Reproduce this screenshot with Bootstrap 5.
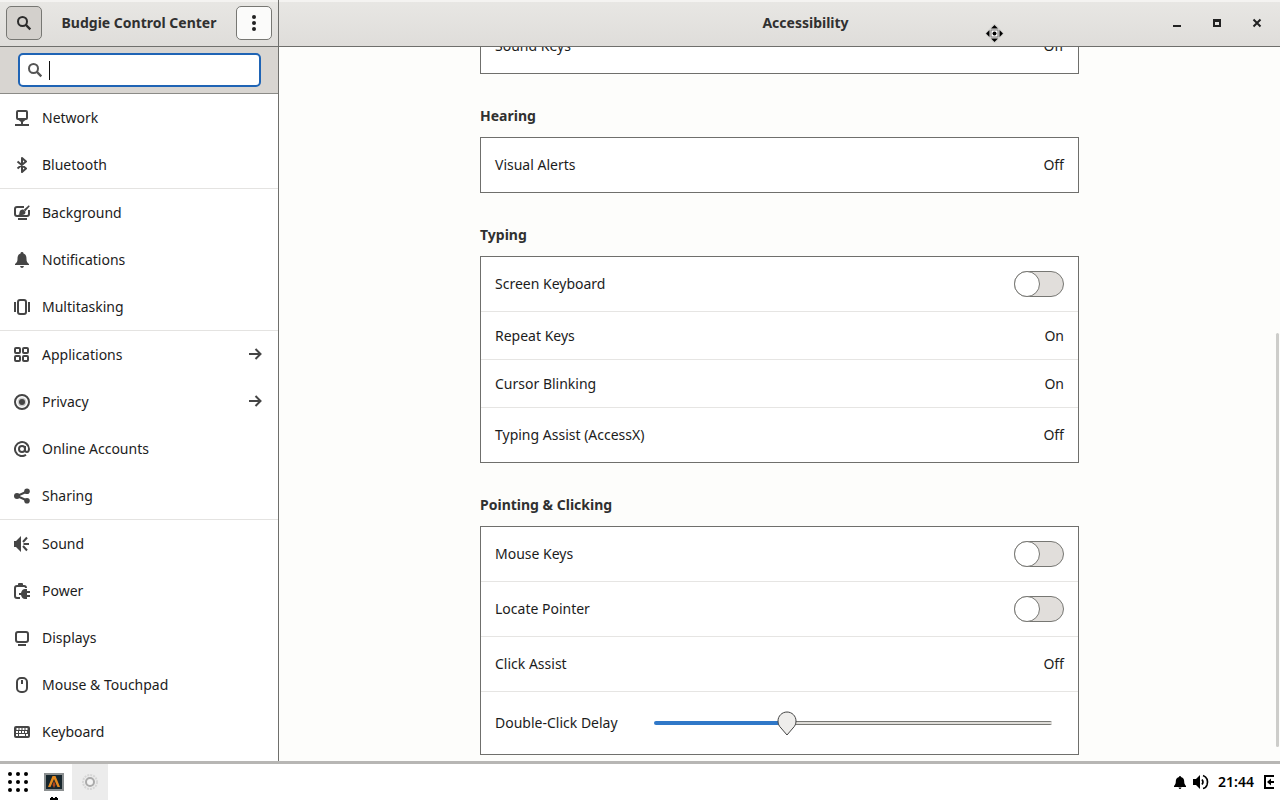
<!DOCTYPE html>
<html lang="en">
<head>
<meta charset="utf-8">
<meta name="viewport" content="width=device-width, initial-scale=1">
<title>Budgie Control Center</title>
<link href="https://cdn.jsdelivr.net/npm/bootstrap@5.3.0/dist/css/bootstrap.min.css" rel="stylesheet">
<style>
  body { font-family: "Noto Sans", sans-serif; font-size: 14px; line-height: 20px; color: #1c1c1c; background: #fdfdfb; }
  svg { display: block; flex: none; fill: #454545; }
  .ln { fill: none; stroke: #454545; stroke-width: 2; }
  .sidebar { width: 279px; border-right: 1px solid #6f6f6c; background: #fff; }
  .titlebar { height: 47px; background: linear-gradient(#e8e7e4, #dfddda); border-bottom: 1px solid #6f6f6c; box-shadow: inset 0 2px #f4f3f1; color: #303030; }
  .titlebar h1 { font-size: 14px; line-height: 20px; }
  .side-title { padding: 0 6px; }
  .tool-btn { width: 36px; height: 34px; border: 1px solid #777773; border-radius: 5px; background: #fbfbfa; }
  .tool-btn.active { background: #d3d0cc; }
  .win-btn { width: 24px; height: 24px; border: 0; background: none; }
  .win-controls { right: 11px; }
  .panel-title { padding-left: 52px; }
  .search-strip { height: 47px; background: #d8d5d1; border-bottom: 1px solid #8b8b87; padding: 0 17px 0 18px; }
  .search-box { height: 34px; border: 2px solid #1f64b5; border-radius: 5px; background: #fff; padding: 0 7px; }
  .search-box input { border: 0; outline: 0; background: none; height: 24px; min-width: 0; caret-color: transparent; }
  .caret { width: 1px; height: 19px; background: #111; margin-left: 6px; }
  .side-link { height: 47px; padding: 0 14px; gap: 12px; color: inherit; text-decoration: none; }
  .side-group + .side-group { border-top: 1px solid #e4e3e1; }
  .settings { width: 100%; max-width: 599px; padding-bottom: 6px; }
  .settings h2 { font-size: 14px; line-height: 20px; color: #303030; margin: 32px 0 11px; }
  .group-box { background: #fff; border: 1px solid #6f6f6c; }
  .set-row { min-height: 54px; padding: 0 14px; }
  .set-row + .set-row { border-top: 1px solid #e6e5e3; min-height: 55px; }
  .set-row + .set-row.short-row { min-height: 48px; }
  .set-row + .set-row.tall-row { min-height: 63px; }
  .toggle { appearance: none; width: 50px; height: 26px; border: 1px solid #777773; border-radius: 13px; background: #e1dedb; margin: 0; }
  .toggle::before { content: ""; display: block; box-sizing: border-box; width: 26px; height: 26px; margin: -1px; border: 1px solid #777773; border-radius: 50%; background: #fff; }
  .toggle:checked::before { margin-left: 23px; }
  .delay { appearance: none; height: 26px; background: none; margin: 0 12px 0 36px; min-width: 0; }
  .delay::-webkit-slider-runnable-track { height: 4px; border-radius: 2px; box-shadow: inset 0 0 0 1px #777773; background: #dedcd8; }
  .delay::-webkit-slider-runnable-track { background: linear-gradient(90deg, #3078c8 33%, transparent 33%), linear-gradient(#777773 1px, #dedcd8 1px 3px, #777773 3px); box-shadow: none; }
  .delay::-webkit-slider-thumb { appearance: none; width: 20px; height: 26px; margin-top: -10px; border: 0; background: url("data:image/svg+xml,%3Csvg xmlns='http://www.w3.org/2000/svg' width='20' height='26'%3E%3Cpath d='M10 1C5 1 1 5 1 10c0 3 1 5 3 7l6 7 6-7c2-2 3-4 3-7 0-5-4-9-9-9z' fill='%23eeedeb' stroke='%23444'/%3E%3C/svg%3E") no-repeat; }
  .scroll-pill { right: 1px; bottom: 14px; width: 3px; height: 58%; border-radius: 2px; background: #cdcdca; }
  .pointer { left: 985px; top: 24px; }
  .taskbar { height: 39px; background: #fff; border-top: 3px solid #b7b6b4; color: #000; }
  .taskbar button { border: 0; background: none; padding: 0; height: 36px; width: 36px; }
  .taskbar .current { background: #ececec; }
  .taskbar svg { fill: #000; }
  .running::after { content: ""; position: absolute; bottom: 0; left: 14px; width: 8px; height: 3px; background: radial-gradient(circle at 2px 2px, #000 2px, transparent 2px) 0 0 / 4px 4px; }
  .clock { font-weight: 600; }
</style>
</head>
<body class="vh-100 d-flex flex-column overflow-hidden">
<div class="d-flex flex-grow-1 overflow-hidden">
  <aside class="sidebar d-flex flex-column flex-shrink-0">
    <header class="titlebar side-title d-flex align-items-center justify-content-between flex-shrink-0">
      <button class="tool-btn active d-flex align-items-center justify-content-center" aria-label="Search">
        <svg width="16" height="16"><circle cx="6.500" cy="6.500" r="4.500" fill="none" stroke="#2c2c2c" stroke-width="2"/><path d="M9.500 9.500l4.800 4.800" stroke="#2c2c2c" stroke-width="2.400"/></svg>
      </button>
      <h1 class="fw-bold m-0">Budgie Control Center</h1>
      <button class="tool-btn d-flex align-items-center justify-content-center" aria-label="Menu">
        <svg width="16" height="16"><g fill="#222"><circle cx="8" cy="2" r="2"/><circle cx="8" cy="8" r="2"/><circle cx="8" cy="14" r="2"/></g></svg>
      </button>
    </header>
    <div class="search-strip flex-shrink-0 d-flex align-items-center">
      <label class="search-box d-flex align-items-center flex-grow-1">
        <svg width="16" height="16"><circle cx="6.500" cy="6.500" r="4.500" fill="none" stroke="#555" stroke-width="2"/><path d="M9.500 9.500l4.800 4.800" stroke="#555" stroke-width="2.400"/></svg>
        <span class="caret"></span>
        <input type="text" class="flex-grow-1 p-0" aria-label="Search settings">
      </label>
    </div>
    <nav class="overflow-hidden">
      <div class="side-group">
        <a href="#" class="side-link d-flex align-items-center"><svg width="16" height="16"><path class="ln" d="M4 1h8q1 0 1 1v6q0 1-1 1H4Q3 9 3 8V2q0-1 1-1z"/><path d="M4.500 8h7v2L9 12v2h6v2H1v-2h6v-2L4.500 10z"/></svg>Network</a>
        <a href="#" class="side-link d-flex align-items-center"><svg width="16" height="16"><path class="ln" stroke-linejoin="round" d="M3.500 4.500l8.500 7L8 15V1l4 3.500-8.500 7"/></svg>Bluetooth</a>
      </div>
      <div class="side-group">
        <a href="#" class="side-link d-flex align-items-center"><svg width="16" height="16"><path class="ln" d="M10 2H3Q1 2 1 4v5q0 2 2 2h10q2 0 2-2V5"/><path d="M4 13h9v2H4zM14.800.2l1 1-4.500 5-1.500-1.500zM9.200 4.500l2.300 2.300q0 3.200-3.500 3.200-2 0-3.700-.5Q6 8.500 5.500 7q.5-3 3.700-2.500z"/></svg>Background</a>
        <a href="#" class="side-link d-flex align-items-center"><svg width="16" height="16"><path d="M8 0q1.500 0 1.500 1.400C12 2.200 12.500 4.500 12.500 7c0 2.500.8 3.800 2.500 5v1H1v-1c1.700-1.200 2.500-2.500 2.500-5 0-2.500.5-4.800 3-5.600Q6.500 0 8 0zM6 14h4q-.5 2-2 2t-2-2z"/></svg>Notifications</a>
        <a href="#" class="side-link d-flex align-items-center"><svg width="16" height="16"><rect class="ln" x="4" y="1" width="8" height="14" rx="2"/><path d="M0 3h2v10H0zM14 3h2v10h-2z"/></svg>Multitasking</a>
      </div>
      <div class="side-group">
        <a href="#" class="side-link d-flex align-items-center"><svg width="16" height="16"><g class="ln"><rect x="1" y="1" width="5" height="5" rx="1"/><rect x="9" y="1" width="5" height="5" rx="1"/><rect x="1" y="9" width="5" height="5" rx="1"/><rect x="9" y="9" width="5" height="5" rx="1"/></g></svg>Applications<svg class="ms-auto" width="16" height="16"><path class="ln" d="M1 7h11M7.500 2l5 5-5 5"/></svg></a>
        <a href="#" class="side-link d-flex align-items-center"><svg width="16" height="16"><circle class="ln" cx="8" cy="8" r="7"/><circle cx="8" cy="8" r="4.500" fill="#ccc"/><circle cx="8" cy="8" r="3"/></svg>Privacy<svg class="ms-auto" width="16" height="16"><path class="ln" d="M1 7h11M7.500 2l5 5-5 5"/></svg></a>
        <a href="#" class="side-link d-flex align-items-center"><svg width="16" height="16"><circle class="ln" cx="8" cy="8" r="3"/><path class="ln" d="M11 5v4q.2 2 2 2t2-3a7 7 0 1 0-3 5.800"/></svg>Online Accounts</a>
        <a href="#" class="side-link d-flex align-items-center"><svg width="16" height="16"><path class="ln" d="M13 3.500L3 8l10 4.500"/><circle cx="3" cy="8" r="3"/><circle cx="13" cy="3.200" r="2.800"/><circle cx="13" cy="12.800" r="2.800"/></svg>Sharing</a>
      </div>
      <div class="side-group">
        <a href="#" class="side-link d-flex align-items-center"><svg width="16" height="16"><path d="M0 5h2l5-5v16l-5-5H0z"/><path class="ln" d="M9 6l4-4.500M9.500 8H15M9 10l4 4.500"/></svg>Sound</a>
        <a href="#" class="side-link d-flex align-items-center"><svg width="16" height="16"><path class="ln" d="M6 15H3q-2 0-2-2V5q0-2 2-2h7q2 0 2 2"/><path d="M4 1q0-1 1-1h3q1 0 1 1v2H4zM5 10h2q1-4 4-4h2v2h3v2h-3v2h3v2h-3v2h-2q-3 0-4-4H5z"/></svg>Power</a>
        <a href="#" class="side-link d-flex align-items-center"><svg width="16" height="16"><rect class="ln" x="2" y="2" width="12" height="10" rx="2"/><path d="M4 14h8v2H4z"/></svg>Displays</a>
        <a href="#" class="side-link d-flex align-items-center"><svg width="16" height="16"><rect class="ln" x="3" y="1" width="10" height="14" rx="4"/><path d="M7 3h2v4H7z"/></svg>Mouse &amp; Touchpad</a>
        <a href="#" class="side-link d-flex align-items-center"><svg width="16" height="16"><rect y="2" width="16" height="12" rx="2"/><path stroke="#fff" stroke-width="2" stroke-dasharray="2 1" d="M2.500 5H14M2 8h12"/><path stroke="#fff" stroke-width="2" d="M2 11h2M5 11h6M12 11h2"/></svg>Keyboard</a>
      </div>
    </nav>
  </aside>
  <main class="d-flex flex-column flex-grow-1 position-relative overflow-hidden">
    <header class="titlebar d-flex align-items-center flex-shrink-0">
      <h1 class="panel-title fw-bold m-0 flex-grow-1 text-center">Accessibility</h1>
      <div class="win-controls position-absolute d-flex gap-3">
        <button class="win-btn p-1" aria-label="Minimize"><svg width="16" height="16"><path d="M4 10h8v2H4z" fill="#222"/></svg></button>
        <button class="win-btn p-1" aria-label="Maximize"><svg width="16" height="16"><path d="M4 4h8v8H4zM6 7v3h4V7z" fill="#222" fill-rule="evenodd"/></svg></button>
        <button class="win-btn p-1" aria-label="Close"><svg width="16" height="16"><path d="M4.500 4.500l7 7m0-7l-7 7" stroke="#222" stroke-width="2"/></svg></button>
      </div>
    </header>
    <div class="d-flex flex-column justify-content-end align-items-center flex-grow-1 overflow-hidden position-relative">
      <div class="settings">
        <section class="group-box"><div class="set-row d-flex align-items-center justify-content-between"><span>Sound Keys</span><span>Off</span></div></section>
        <h2 class="fw-bold">Hearing</h2>
        <section class="group-box"><div class="set-row d-flex align-items-center justify-content-between"><span>Visual Alerts</span><span>Off</span></div></section>
        <h2 class="fw-bold">Typing</h2>
        <section class="group-box">
          <div class="set-row d-flex align-items-center justify-content-between"><label for="osk">Screen Keyboard</label><input id="osk" type="checkbox" role="switch" class="toggle"></div>
          <div class="set-row short-row d-flex align-items-center justify-content-between"><span>Repeat Keys</span><span>On</span></div>
          <div class="set-row short-row d-flex align-items-center justify-content-between"><span>Cursor Blinking</span><span>On</span></div>
          <div class="set-row d-flex align-items-center justify-content-between"><span>Typing Assist (AccessX)</span><span>Off</span></div>
        </section>
        <h2 class="fw-bold">Pointing &amp; Clicking</h2>
        <section class="group-box">
          <div class="set-row d-flex align-items-center justify-content-between"><label for="mk">Mouse Keys</label><input id="mk" type="checkbox" role="switch" class="toggle"></div>
          <div class="set-row d-flex align-items-center justify-content-between"><label for="lp">Locate Pointer</label><input id="lp" type="checkbox" role="switch" class="toggle"></div>
          <div class="set-row d-flex align-items-center justify-content-between"><span>Click Assist</span><span>Off</span></div>
          <div class="set-row tall-row d-flex align-items-center"><label for="dc">Double-Click Delay</label><input id="dc" type="range" min="0" max="1000" value="325" class="delay flex-grow-1"></div>
        </section>
      </div>
      <div class="scroll-pill position-absolute"></div>
    </div>
  </main>
</div>
<footer class="taskbar d-flex align-items-center flex-shrink-0">
  <button class="d-flex align-items-center justify-content-center" aria-label="Applications"><svg width="20" height="20"><g><circle cx="2" cy="2" r="2"/><circle cx="10" cy="2" r="2"/><circle cx="18" cy="2" r="2"/><circle cx="2" cy="10" r="2"/><circle cx="10" cy="10" r="2"/><circle cx="18" cy="10" r="2"/><circle cx="2" cy="18" r="2"/><circle cx="10" cy="18" r="2"/><circle cx="18" cy="18" r="2"/></g></svg></button>
  <div class="d-flex ps-0">
    <button class="running position-relative d-flex align-items-center justify-content-center mx-auto" aria-label="Alacritty"><svg width="20" height="20"><rect width="20" height="18" y="1" fill="#8b8f90"/><rect x="2" y="3" width="16" height="14" fill="#17262d"/><path d="M8.500 4h3l4.500 11h-2.500L10 7l-3.500 8H4z" fill="#e58a1f"/><path d="M10 9l1.500 4L10 16l-1.500-3z" fill="#b3471c"/></svg></button>
    <button class="current d-flex align-items-center justify-content-center" aria-label="Settings"><svg width="20" height="20"><circle cx="10" cy="10" r="7" fill="none" stroke="#d6d6d6" stroke-width="2" stroke-dasharray="2 1"/><circle cx="10" cy="10" r="4" fill="#f4f4f4" stroke="#aaa" stroke-width="2"/></svg></button>
  </div>
  <div class="ms-auto d-flex align-items-center gap-1 pe-1">
    <svg width="16" height="16"><path d="M8 2q1 0 1 1c2.500.8 3.200 2.500 3.200 4.500 0 2 .6 3.300 1.800 4.500v1H2v-1c1.200-1.200 1.800-2.500 1.800-4.500C3.800 5.500 4.500 3.800 7 3q0-1 1-1zM6.500 13.500h3q-.5 1.500-1.500 1.500t-1.500-1.500z"/></svg>
    <svg width="18" height="16"><path d="M1 5h3l4-4v14l-4-4H1z"/><path d="M10 5.500q2 2.500 0 5M11 1.500q6 2.500 4 9.500-1 3-4 3.500" fill="none" stroke="#000" stroke-width="1.600"/></svg>
    <span class="clock mx-1">21:44</span>
    <svg width="14" height="16"><path d="M12 2H3v12h9M12 8H7" fill="none" stroke="#000" stroke-width="2"/><path d="M5 8l4-3.500v7z"/></svg>
  </div>
</footer>
<div class="pointer position-absolute"><svg width="20" height="20"><path d="M9.500 0l9 9.500-9 9.500-9-9.500z" fill="#e8e7e4" stroke="#c9c8c5"/><path d="M9.500 1l3.500 3.500H6zM9.500 18l3.500-3.500H6zM1 9.500L4.500 6v7zM18 9.500L14.500 6v7z" fill="#000"/><rect x="6" y="6" width="7" height="7" fill="#fff" stroke="#777"/><circle cx="9.500" cy="9.500" r="2" fill="#000"/></svg></div>
<script src="https://cdn.jsdelivr.net/npm/bootstrap@5.3.0/dist/js/bootstrap.bundle.min.js"></script>
</body>
</html>
